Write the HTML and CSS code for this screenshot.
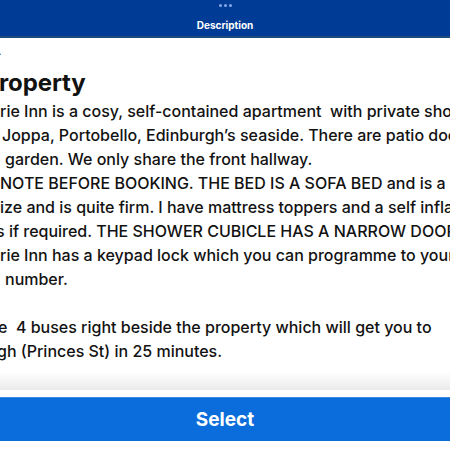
FILE: index.html
```html
<!DOCTYPE html>
<html lang="en">
<head>
  <meta charset="UTF-8">
  <meta name="viewport" content="width=device-width, initial-scale=1.0">
  <title>Description</title>
  <link rel="stylesheet" href="styles.css">
</head>
<body>
  <header class="top-bar">
    <div class="grabber"><span></span><span></span><span></span></div>
    <h1>Description</h1>
  </header>

  <main class="sheet">
    <div class="stray">.</div>
    <h2 class="title">roperty</h2>
    <div class="body-text">
      <div class="line">rie Inn is a cosy, self-contained apartment&nbsp; with private shower</div>
      <div class="line in-2"> Joppa, Portobello, Edinburgh’s seaside. There are patio doors</div>
      <div class="line in-5">garden. We only share the front hallway.</div>
      <div class="line">NOTE BEFORE BOOKING. THE BED IS A SOFA BED and is a</div>
      <div class="line">ize and is quite firm. I have mattress toppers and a self inflating</div>
      <div class="line cut">s if required. THE SHOWER CUBICLE HAS A NARROW DOOR</div>
      <div class="line">rie Inn has a keypad lock which you can programme to your</div>
      <div class="line in-5">number.</div>
      <div class="line blank">&nbsp;</div>
      <div class="line cut-e">e&nbsp; 4 buses right beside the property which will get you to</div>
      <div class="line cut-g">gh (Princes St) in 25 minutes.</div>
    </div>
    <div class="fade"></div>
  </main>

  <footer class="actions">
    <button class="select-btn">Select</button>
  </footer>
</body>
</html>
```

FILE: styles.css
```css
* {
  margin: 0;
  padding: 0;
  box-sizing: border-box;
}

body {
  width: 450px;
  height: 450px;
  overflow: hidden;
  font-family: Inter, "Noto Sans", sans-serif;
  background: #fff;
  color: #121212;
  display: flex;
  flex-direction: column;
}

/* Header */
.top-bar {
  height: 38px;
  background: #003c96;
  border-bottom: 2px solid #1b4c7c;
  display: flex;
  flex-direction: column;
  align-items: center;
  padding-top: 4px;
}

.grabber {
  display: flex;
  gap: 2px;
}

.grabber span {
  width: 3px;
  height: 3px;
  border-radius: 50%;
  background: #86a8e6;
}

.top-bar h1 {
  margin-top: 12px;
  font-size: 10px;
  font-weight: 700;
  color: #fff;
}

/* Sheet */
.sheet {
  flex: 1;
  overflow: hidden;
  position: relative;
  padding-top: 7px;
}

.stray {
  font-size: 12px;
  line-height: 12px;
  margin-left: -2px;
  height: 23px;
}

.title {
  font-size: 24px;
  font-weight: 700;
  line-height: 30px;
  margin-left: -1px;
  letter-spacing: -0.1px;
}

.body-text {
  margin-top: 1px;
  font-size: 16px;
  line-height: 24px;
  font-weight: 500;
}

.line {
  white-space: nowrap;
}

.in-2 { margin-left: 2px; }
.in-5 { margin-left: 5px; }
.cut { margin-left: -4px; }
.cut-e { margin-left: -2px; }
.cut-g { margin-left: -3px; }

.fade {
  position: absolute;
  left: 0;
  right: 0;
  bottom: 0;
  height: 18px;
  background: linear-gradient(rgba(255, 255, 255, 0), #eaeaea);
}

/* Bottom action */
.actions {
  height: 60px;
  padding-top: 7px;
  background: #fff;
}

.select-btn {
  width: 100%;
  height: 44px;
  border: none;
  border-top: 1px solid #3a8ae6;
  background: #0a6ddb;
  color: #fff;
  font-family: Inter, "Noto Sans", sans-serif;
  font-size: 19px;
  font-weight: 700;
}
```
